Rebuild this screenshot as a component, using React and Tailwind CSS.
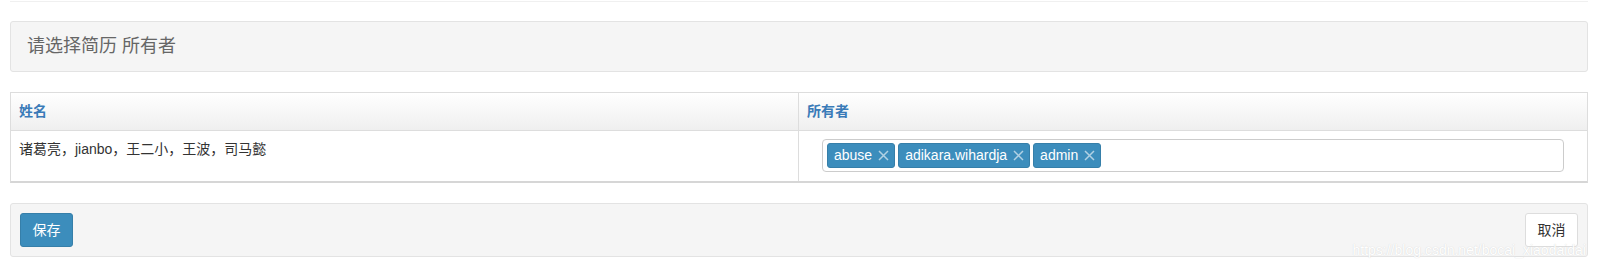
import React from 'react';

const owners = ['abuse', 'adikara.wihardja', 'admin'];

function Tag({ label }) {
  return (
    <span className="flex h-[25px] items-center gap-[6px] rounded-[3px] border border-[#367fa9] bg-[#3c8dbc] pl-[6px] pr-[5px] text-[14px] text-white">
      {label}
      <svg width="11" height="11" viewBox="0 0 11 11" className="opacity-60">
        <path d="M1 1 L10 10 M10 1 L1 10" stroke="#fff" strokeWidth="1.5" />
      </svg>
    </span>
  );
}

export default function App() {
  return (
    <div
      className="relative h-[267px] w-full bg-white px-[10px] text-[#333]"
      style={{ fontFamily: '"Liberation Sans", "Noto Sans CJK SC", sans-serif' }}
    >
      {/* leftover edge of the block above */}
      <div className="h-[2px] border-b border-[#f0f0f0]" />

      {/* Heading */}
      <div className="mt-[19px] flex h-[51px] items-center rounded-[3px] border border-[#e3e3e3] bg-[#f5f5f5] px-[16px] text-[18px] text-[#666]">
        请选择简历 所有者
      </div>

      {/* Table */}
      <div className="mt-[20px] border border-[#dddddd] border-b-[2px] border-b-[#d6d6d6]">
        <div className="grid h-[38px] grid-cols-2 border-b border-[#dddddd] bg-gradient-to-b from-white to-[#efefef] text-[14px] font-bold text-[#3a7bb8]">
          <div className="flex items-center border-r border-[#dddddd] px-[8px]">姓名</div>
          <div className="flex items-center px-[8px]">所有者</div>
        </div>
        <div className="grid h-[50px] grid-cols-2 text-[14px]">
          <div className="border-r border-[#dddddd] px-[8px] pt-[8px]">诸葛亮，jianbo，王二小，王波，司马懿</div>
          <div className="px-[23px] pt-[8px]">
            <div className="flex h-[33px] items-center gap-[3px] rounded-[4px] border border-[#cccccc] px-[4px]">
              {owners.map((o) => (
                <Tag key={o} label={o} />
              ))}
            </div>
          </div>
        </div>
      </div>

      {/* Footer */}
      <div className="mt-[20px] flex h-[54px] items-center justify-between rounded-[3px] border border-[#e3e3e3] bg-[#f5f5f5] px-[9px]">
        <button className="h-[34px] w-[53px] rounded-[3px] border border-[#367fa9] bg-[#3c8dbc] text-[14px] text-white">
          保存
        </button>
        <button className="h-[34px] w-[53px] rounded-[3px] border border-[#dddddd] bg-white text-[14px] text-[#333]">
          取消
        </button>
      </div>

      {/* watermark */}
      <span className="absolute right-[12px] top-[240px] text-[14px] text-white [text-shadow:0_0_1px_#ccc]">
        https://blog.csdn.net/bocai_xiaodaidai
      </span>
    </div>
  );
}
